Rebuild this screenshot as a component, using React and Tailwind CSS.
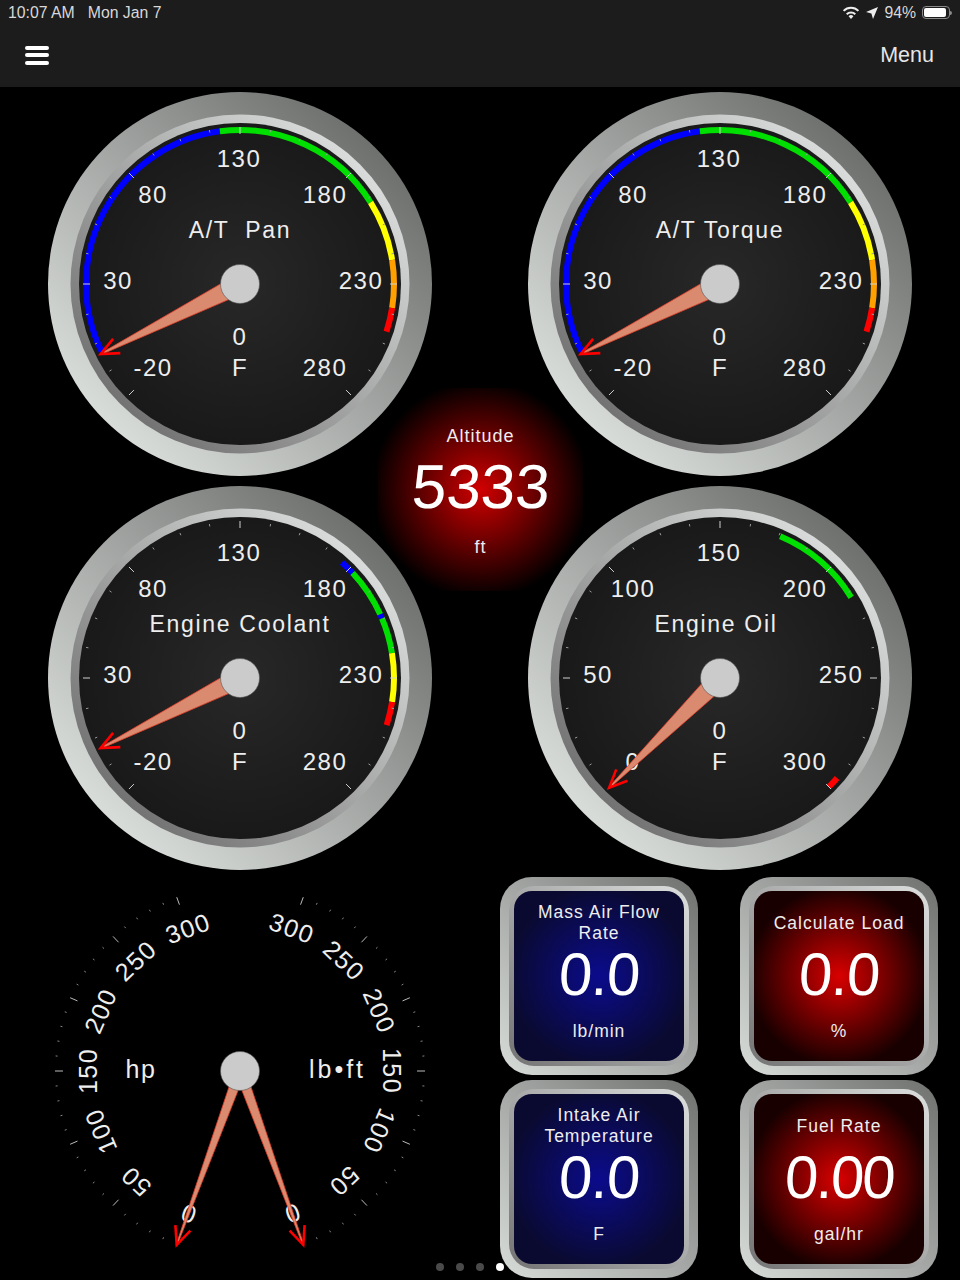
import React from "react";

const polar = (r, deg) => {
  const a = (deg * Math.PI) / 180;
  return [r * Math.sin(a), -r * Math.cos(a)];
};

const arcPath = (r, from, to) => {
  const [x1, y1] = polar(r, from);
  const [x2, y2] = polar(r, to);
  return `M${x1} ${y1}A${r} ${r} 0 ${to - from > 180 ? 1 : 0} 1 ${x2} ${y2}`;
};

const Needle = ({ angle, tip = 156, base = 18 }) => (
  <g transform={`rotate(${angle})`}>
    <polygon
      points={`${-base / 2},-14 ${base / 2},-14 0.6,${-tip} -0.6,${-tip}`}
      fill="#d98a6f"
      stroke="#e8402c"
      strokeWidth="0.7"
    />
    <path
      d={`M-8 ${-tip + 18}L0 ${-tip}L8 ${-tip + 18}`}
      fill="none"
      stroke="#ff0000"
      strokeWidth="2.6"
    />
  </g>
);

const Hub = () => <circle r="19.5" fill="#cbcbcb" stroke="#555" strokeWidth="0.6" />;

const ticks = Array.from({ length: 25 }, (_, i) => -135 + i * 11.25);

const Gauge = ({ id, title, titleX = 0, labels, arcs, angle }) => {
  const placed = [
    [labels[0], -87, 92],
    [labels[1], -122, 5],
    [labels[2], -87, -81],
    [labels[3], -1, -117],
    [labels[4], 85, -81],
    [labels[5], 121, 5],
    [labels[6], 85, 92],
  ];
  return (
    <svg width="384" height="384" viewBox="-192 -192 384 384" className="relative z-10 block">
      <defs>
        <linearGradient id={`${id}-bezel`} x1="0.85" y1="0.15" x2="0.15" y2="0.85">
          <stop offset="0" stopColor="#6f716f" />
          <stop offset="1" stopColor="#d8dcd9" />
        </linearGradient>
        <linearGradient id={`${id}-ring`} x1="0.85" y1="0.15" x2="0.15" y2="0.85">
          <stop offset="0" stopColor="#d8dbd9" />
          <stop offset="1" stopColor="#737373" />
        </linearGradient>
        <radialGradient id={`${id}-face`}>
          <stop offset="0" stopColor="#282828" />
          <stop offset="1" stopColor="#191919" />
        </radialGradient>
      </defs>
      <circle r="192" fill={`url(#${id}-bezel)`} />
      <circle r="169.5" fill={`url(#${id}-ring)`} />
      <circle r="161" fill={`url(#${id}-face)`} />
      {arcs.map(([from, to, color]) => (
        <path key={from} d={arcPath(154, from, to)} fill="none" stroke={color} strokeWidth="6" />
      ))}
      {ticks.map((t, i) => {
        const major = i % 4 === 0;
        const [x1, y1] = polar(major ? 150 : 154.5, t);
        const [x2, y2] = polar(157, t);
        return (
          <line
            key={t}
            x1={x1}
            y1={y1}
            x2={x2}
            y2={y2}
            stroke={major ? "#d0d0d0" : "#999999"}
            strokeWidth="1"
          />
        );
      })}
      <g className="fill-[#eeeeee] text-[24px] tracking-[1.5px] font-['Liberation_Sans',sans-serif]" textAnchor="middle">
        {placed.map(([text, x, y]) => (
          <text key={`${text}${x}`} x={x} y={y}>
            {text}
          </text>
        ))}
        <text x="0" y="61">0</text>
        <text x="0" y="92">F</text>
        <text x={titleX} y="-46" className="text-[23px] tracking-[1.7px]" xmlSpace="preserve">
          {title}
        </text>
      </g>
      <Needle angle={angle} />
      <Hub />
    </svg>
  );
};

const dialTicks = Array.from({ length: 31 }, (_, i) => 20 + (i * 140) / 30);
const dialLabels = ["300", "250", "200", "150", "100", "50", "0"];

const PowerDial = () => (
  <svg width="480" height="402" viewBox="-240 -194 480 402" className="block">
    {[-1, 1].map((side) =>
      dialTicks.map((t, i) => {
        const major = i % 5 === 0;
        const [x1, y1] = polar(major ? 177 : 183, side * t);
        const [x2, y2] = polar(185, side * t);
        return (
          <line
            key={`${side}${t}`}
            x1={x1}
            y1={y1}
            x2={x2}
            y2={y2}
            stroke={major ? "#bbbbbb" : "#888888"}
            strokeWidth="1"
          />
        );
      })
    )}
    <g className="fill-[#eeeeee] text-[25px] tracking-[1.5px] font-['Liberation_Sans',sans-serif]" textAnchor="middle">
      {[-1, 1].map((side) =>
        dialLabels.map((label, i) => (
          <text key={`${side}${label}`} y="-143" transform={`rotate(${side * (20 + (i * 140) / 6)})`}>
            {label}
          </text>
        ))
      )}
      <text x="-99" y="7">hp</text>
      <text x="97.5" y="7" className="tracking-[3px]">lb•ft</text>
    </g>
    <Needle angle={-160} tip={185} base={10} />
    <Needle angle={160} tip={185} base={10} />
    <Hub />
  </svg>
);

const Readout = ({ value, className = "" }) => (
  <div
    className={`font-['Liberation_Sans',sans-serif] text-white text-[60px] leading-[56px] h-[56px] -skew-x-3 ${className}`}
  >
    {value}
  </div>
);

const Tile = ({ title, value, unit, tone }) => (
  <div className="w-[198px] h-[198px] rounded-[32px] p-[9px] bg-[linear-gradient(225deg,#6f716f,#d8dcd9)]">
    <div className="w-full h-full rounded-[25px] p-[5px] bg-[linear-gradient(225deg,#dcdfdd,#737373)]">
      <div
        className={`w-full h-full rounded-[18px] flex flex-col items-center text-[#eeeeee] text-[17.5px] tracking-[1px] ${
          tone === "blue"
            ? "bg-[radial-gradient(circle,#0b0b8c_0%,#0a0a30_75%)]"
            : "bg-[radial-gradient(circle,#d80000_0%,#180000_75%)]"
        }`}
      >
        <div className="h-[56px] pt-[8px] flex items-center justify-center text-center leading-[21px] whitespace-pre-line">
          {title}
        </div>
        <Readout value={value} className={value.length > 3 ? "tracking-[-2px]" : "tracking-[-1px]"} />
        <div className="mt-[18px] leading-[21px]">{unit}</div>
      </div>
    </div>
  </div>
);

const App = () => {
  return (
    <div className="w-[960px] h-[1280px] bg-black overflow-hidden relative font-['Liberation_Sans',sans-serif]">
      <header className="h-[87px] bg-[#1c1c1c] text-[#e6e6e6]">
        <div className="h-[25px] flex items-center justify-between pl-[8px] pr-[8px] text-[15.8px] text-[#d8d8d8]">
          <div className="flex gap-[13px]">
            <span>10:07 AM</span>
            <span>Mon Jan 7</span>
          </div>
          <div className="flex items-center gap-[6px]">
            <svg width="18" height="13" viewBox="0 0 18 13">
              <path d="M9 13L6.6 10.2A3.4 3.4 0 0 1 11.4 10.2Z" fill="#eee" />
              <path d="M4.7 8.2A6.2 6.2 0 0 1 13.3 8.2" fill="none" stroke="#eee" strokeWidth="2" />
              <path d="M1.6 4.9A10.4 10.4 0 0 1 16.4 4.9" fill="none" stroke="#eee" strokeWidth="2" />
            </svg>
            <svg width="12" height="12" viewBox="0 0 12 12">
              <polygon points="12,0 7,12 5.4,6.6 0,5" fill="#eee" />
            </svg>
            <span>94%</span>
            <div className="flex items-center">
              <div className="w-[28px] h-[13px] rounded-[4px] border border-[#8a8a8a] p-[1px]">
                <div className="w-[92%] h-full rounded-[2px] bg-white" />
              </div>
              <div className="w-[2px] h-[4px] bg-[#8a8a8a] rounded-r-sm" />
            </div>
          </div>
        </div>
        <div className="flex items-center justify-between pl-[25px] pr-[26px] mt-[5px] h-[50px]">
          <div className="flex flex-col gap-[3.5px] w-[24px]">
            <div className="h-[4px] bg-white rounded-full" />
            <div className="h-[4px] bg-white rounded-full" />
            <div className="h-[4px] bg-white rounded-full" />
          </div>
          <span className="text-[21.5px]">Menu</span>
        </div>
      </header>

      <main className="relative pt-[5px]">
        <div className="absolute left-[378px] top-[301px] w-[205px] h-[203px] flex flex-col items-center text-[#eeeeee] text-[18px] tracking-[1px] bg-[radial-gradient(circle_closest-side,#d00000_0%,#000000_108%)]">
          <div className="mt-[38px] leading-[21px]">Altitude</div>
          <Readout value="5333" className="mt-[12px] text-[62px] tracking-[0px]" />
          <div className="mt-[22px] leading-[21px]">ft</div>
        </div>

        <div className="grid grid-cols-2 justify-items-center gap-y-[10px]">
          <Gauge
            id="pan"
            title="A/T  Pan"
            labels={["-20", "30", "80", "130", "180", "230", "280"]}
            angle={-116.7}
            arcs={[
              [-116, -7.5, "#0000ff"],
              [-7.5, 58, "#00e000"],
              [58, 81, "#ffff00"],
              [81, 99, "#ffa000"],
              [99, 108, "#ff0000"],
            ]}
          />
          <Gauge
            id="torque"
            title="A/T Torque"
            labels={["-20", "30", "80", "130", "180", "230", "280"]}
            angle={-116.7}
            arcs={[
              [-116, -7.5, "#0000ff"],
              [-7.5, 58, "#00e000"],
              [58, 81, "#ffff00"],
              [81, 99, "#ffa000"],
              [99, 108, "#ff0000"],
            ]}
          />
          <Gauge
            id="coolant"
            title="Engine Coolant"
            labels={["-20", "30", "80", "130", "180", "230", "280"]}
            angle={-116.7}
            arcs={[
              [41.4, 47, "#0000ff"],
              [47, 65.6, "#00e000"],
              [65.6, 67.2, "#0000ff"],
              [67.2, 80.7, "#00e000"],
              [80.7, 99, "#ffff00"],
              [99, 107.8, "#ff0000"],
            ]}
          />
          <Gauge
            id="oil"
            title="Engine Oil"
            titleX={-4}
            labels={["0", "50", "100", "150", "200", "250", "300"]}
            angle={-134.7}
            arcs={[
              [23, 58.4, "#00e000"],
              [130.5, 135, "#ff0000"],
            ]}
          />
        </div>

        <div className="grid grid-cols-2 mt-[7px]">
          <PowerDial />
          <div className="grid grid-cols-2 w-[438px] ml-[20px] gap-x-[42px] gap-y-[4px]">
            <Tile title={"Mass Air Flow\nRate"} value="0.0" unit="lb/min" tone="blue" />
            <Tile title="Calculate Load" value="0.0" unit="%" tone="red" />
            <Tile title={"Intake Air\nTemperature"} value="0.0" unit="F" tone="blue" />
            <Tile title="Fuel Rate" value="0.00" unit="gal/hr" tone="red" />
          </div>
        </div>
      </main>

      <div className="absolute left-[436px] bottom-[9px] flex gap-[12px]">
        <div className="w-[8px] h-[8px] rounded-full bg-[#4a4a4a]" />
        <div className="w-[8px] h-[8px] rounded-full bg-[#4a4a4a]" />
        <div className="w-[8px] h-[8px] rounded-full bg-[#4a4a4a]" />
        <div className="w-[8px] h-[8px] rounded-full bg-white" />
      </div>
    </div>
  );
};

export default App;
